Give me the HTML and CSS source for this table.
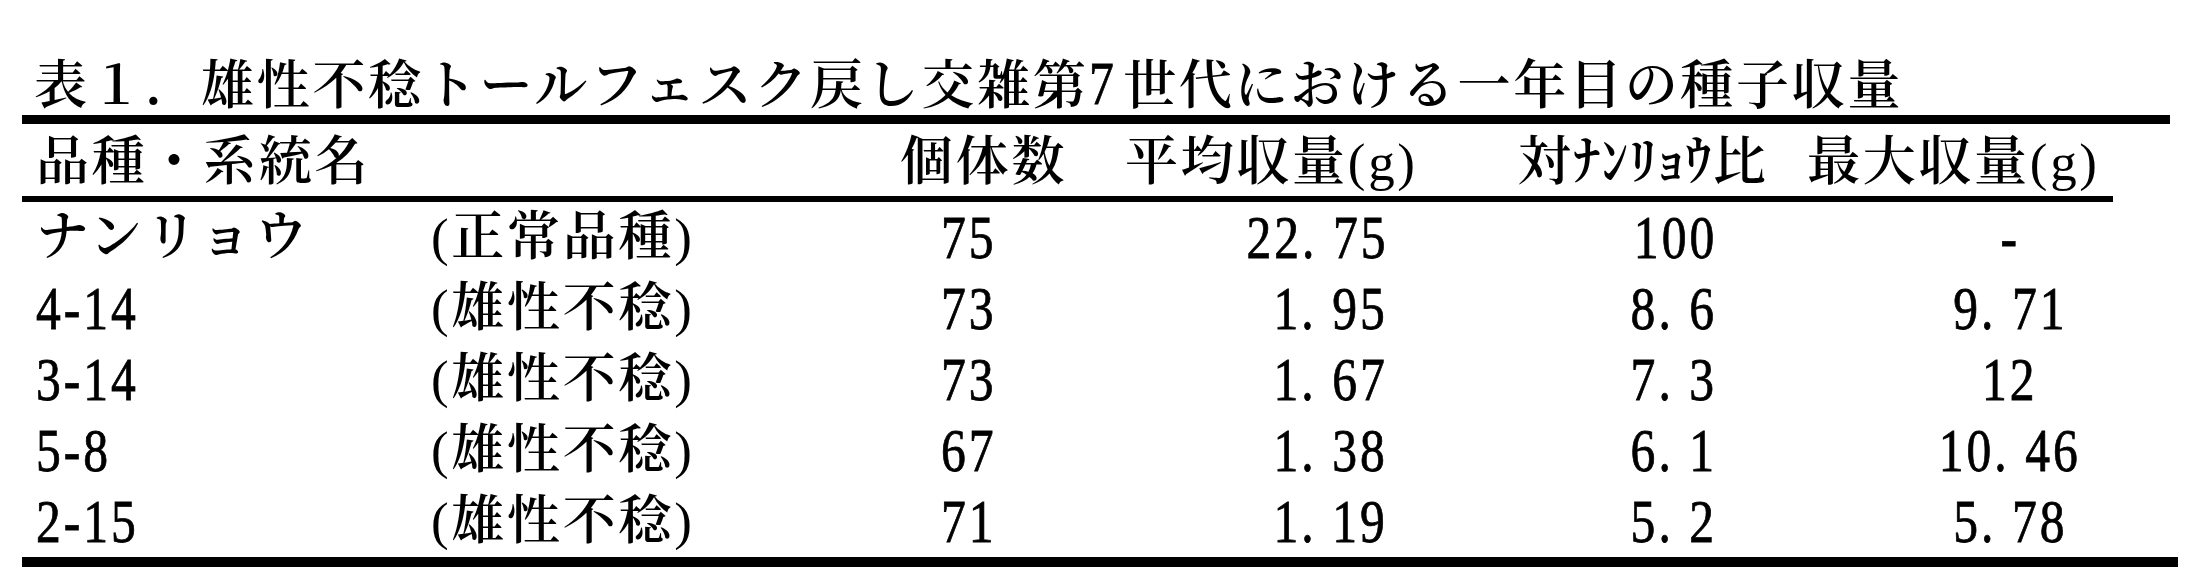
FILE: index.html
```html
<!DOCTYPE html>
<html lang="ja">
<head>
<meta charset="utf-8">
<title>表１</title>
<link rel="stylesheet" href="styles.css">
</head>
<body>
<div class="sheet">
  <h1 class="title">表１．雄性不稔トールフェスク戻し交雑第<span class="n">7</span>世代における一年目の種子収量</h1>
  <div class="rule rule-top"></div>
  <div class="row head">
    <div class="c name-h">品種・系統名</div>
    <div class="c count-h">個体数</div>
    <div class="c avg-h">平均収量<span class="lat">(g)</span></div>
    <div class="c ratio-h">対<span class="hw">ﾅﾝﾘｮｳ</span>比</div>
    <div class="c max-h">最大収量<span class="lat">(g)</span></div>
  </div>
  <div class="rule rule-mid"></div>
  <div class="row">
    <div class="c name">ナンリョウ</div>
    <div class="c kind"><span class="lat">(</span>正常品種<span class="lat">)</span></div>
    <div class="c num count"><span class="n">75</span></div>
    <div class="c num avg"><span class="n">22. 75</span></div>
    <div class="c num ratio"><span class="n">100</span></div>
    <div class="c num max"><span class="n">-</span></div>
  </div>
  <div class="row">
    <div class="c name num"><span class="n">4-14</span></div>
    <div class="c kind"><span class="lat">(</span>雄性不稔<span class="lat">)</span></div>
    <div class="c num count"><span class="n">73</span></div>
    <div class="c num avg"><span class="n">1. 95</span></div>
    <div class="c num ratio"><span class="n">8. 6</span></div>
    <div class="c num max"><span class="n">9. 71</span></div>
  </div>
  <div class="row">
    <div class="c name num"><span class="n">3-14</span></div>
    <div class="c kind"><span class="lat">(</span>雄性不稔<span class="lat">)</span></div>
    <div class="c num count"><span class="n">73</span></div>
    <div class="c num avg"><span class="n">1. 67</span></div>
    <div class="c num ratio"><span class="n">7. 3</span></div>
    <div class="c num max"><span class="n">12</span></div>
  </div>
  <div class="row">
    <div class="c name num"><span class="n">5-8</span></div>
    <div class="c kind"><span class="lat">(</span>雄性不稔<span class="lat">)</span></div>
    <div class="c num count"><span class="n">67</span></div>
    <div class="c num avg"><span class="n">1. 38</span></div>
    <div class="c num ratio"><span class="n">6. 1</span></div>
    <div class="c num max"><span class="n">10. 46</span></div>
  </div>
  <div class="row">
    <div class="c name num"><span class="n">2-15</span></div>
    <div class="c kind"><span class="lat">(</span>雄性不稔<span class="lat">)</span></div>
    <div class="c num count"><span class="n">71</span></div>
    <div class="c num avg"><span class="n">1. 19</span></div>
    <div class="c num ratio"><span class="n">5. 2</span></div>
    <div class="c num max"><span class="n">5. 78</span></div>
  </div>
  <div class="rule rule-bottom"></div>
</div>
</body>
</html>
```

FILE: styles.css
```css
html, body {
  margin: 0;
  padding: 0;
  background: #fff;
}

body {
  width: 2201px;
  height: 581px;
  overflow: hidden;
  color: #000;
  font-family: "Liberation Serif", "Noto Serif CJK JP", "Noto Sans CJK JP", serif;
  font-size: 53px;
  font-weight: 600;
}

.sheet {
  padding: 55px 0 0 22px;
  width: 2156px;
}

.title {
  margin: 0;
  padding-left: 12px;
  font-size: 53px;
  font-weight: 600;
  line-height: 56px;
  height: 56px;
  letter-spacing: 2.7px;
  white-space: nowrap;
}

.rule {
  background: #000;
}

.rule-top {
  margin-top: 4px;
  width: 2148px;
  height: 9px;
}

.rule-mid {
  width: 2091px;
  height: 6px;
}

.rule-bottom {
  width: 2156px;
  height: 10px;
}

.row {
  display: grid;
  grid-template-columns: 409px 449px 220px 340px 340px 398px;
  height: 71px;
  line-height: 71px;
  letter-spacing: 2.7px;
  white-space: nowrap;
}

.head {
  box-sizing: border-box;
  height: 72px;
  padding-top: 4px;
  line-height: 68px;
}

.name-h {
  grid-column: 1 / span 2;
  padding-left: 14px;
}

.count-h {
  padding-left: 20px;
}

.avg-h {
  padding-left: 25px;
}

.ratio-h {
  padding-left: 78px;
}

.max-h {
  padding-left: 27px;
}

.hw {
  letter-spacing: 1.35px;
}

.lat {
  font-weight: 400;
}

/* tall, narrow half-width numerals */
.n {
  display: inline-block;
  font-size: 62px;
  font-weight: 400;
  letter-spacing: 3.75px;
  transform: scaleX(0.8);
  transform-origin: left center;
  white-space: pre;
  -webkit-text-stroke: 0.8px #000;
}

.title .n {
  line-height: 56px;
}

.num {
  letter-spacing: 0;
}

.name {
  padding-left: 14px;
}

.kind {
  padding-left: 0;
}

.count {
  text-align: center;
  padding-right: 42px;
}

.count .n,
.max .n {
  transform-origin: center center;
}

.avg {
  text-align: right;
  padding-right: 52px;
}

.ratio {
  text-align: right;
  padding-right: 63px;
}

.avg .n,
.ratio .n {
  transform-origin: right center;
}

.max {
  text-align: center;
  padding-left: 62px;
}
```
